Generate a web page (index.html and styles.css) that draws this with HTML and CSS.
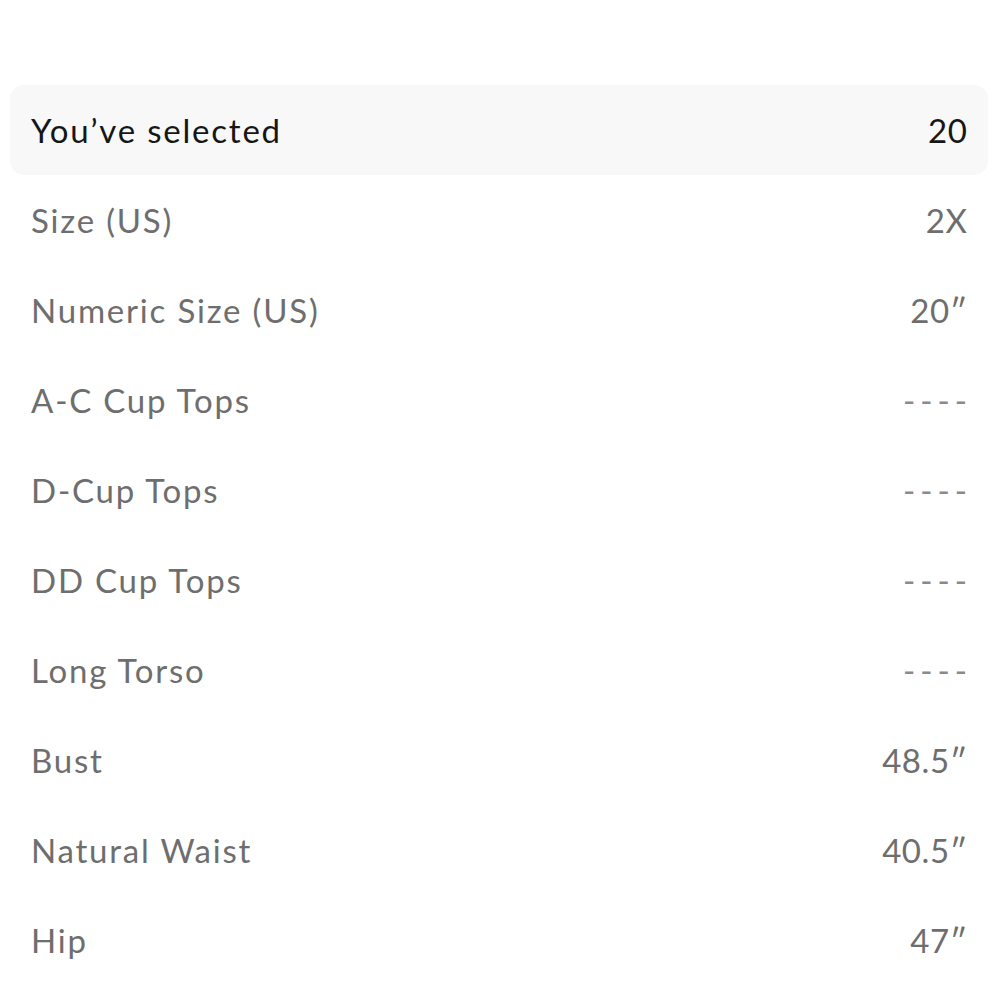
FILE: index.html
```html
<!DOCTYPE html>
<html>
    <head>
        <meta charset="UTF-8">
        <meta name="viewport" content="width=device-width, initial-scale=1">
        <link rel="stylesheet" href="styles.css">
    </head>
    <body>
        <div class="size-chart">
            <div class="row selected">
                <span class="label">You’ve selected</span>
                <span class="value">20</span>
            </div>
            <div class="row">
                <span class="label">Size (US)</span>
                <span class="value">2X</span>
            </div>
            <div class="row">
                <span class="label">Numeric Size (US)</span>
                <span class="value">20″</span>
            </div>
            <div class="row">
                <span class="label">A-C Cup Tops</span>
                <span class="value dash">----</span>
            </div>
            <div class="row">
                <span class="label">D-Cup Tops</span>
                <span class="value dash">----</span>
            </div>
            <div class="row">
                <span class="label">DD Cup Tops</span>
                <span class="value dash">----</span>
            </div>
            <div class="row">
                <span class="label">Long Torso</span>
                <span class="value dash">----</span>
            </div>
            <div class="row">
                <span class="label">Bust</span>
                <span class="value">48.5″</span>
            </div>
            <div class="row">
                <span class="label">Natural Waist</span>
                <span class="value">40.5″</span>
            </div>
            <div class="row">
                <span class="label">Hip</span>
                <span class="value">47″</span>
            </div>
        </div>
    </body>
</html>
```

FILE: styles.css
```css
* {
    box-sizing: border-box;
}

body {
    margin: 0;
    background: #fff;
    font-family: "Lato", "Noto Sans", sans-serif;
}

/* The list of measurements */
.size-chart {
    padding: 85px 12px 0 10px;
}

.row {
    display: flex;
    justify-content: space-between;
    align-items: center;
    height: 90px;
    padding: 0 21px;
    font-size: 33px;
    letter-spacing: 1.8px;
    color: #6e6e6e;
}

.value {
    letter-spacing: 0.6px;
    margin-right: -0.6px;
}

/* Highlighted first row */
.row.selected {
    background: #f8f8f8;
    border-radius: 14px;
    color: #161616;
}

.dash {
    letter-spacing: 5px;
    margin-right: -5px;
    color: #8a8a8a;
}
```
